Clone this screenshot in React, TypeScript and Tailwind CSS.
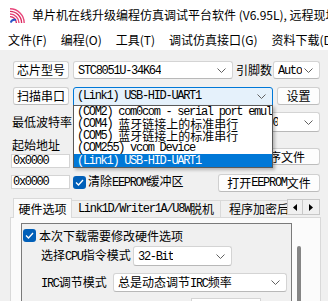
import React from "react";

const MONO = "font-['Liberation_Mono',monospace] text-[12px] tracking-[-1.3px]";

function Chevron() {
  return (
    <svg width="9" height="5" viewBox="0 0 9 5" className="shrink-0">
      <polyline points="0.5,0.5 4.5,4.5 8.5,0.5" fill="none" stroke="#606060" strokeWidth="1" />
    </svg>
  );
}

function Select({
  className,
  children,
}: {
  className: string;
  children: React.ReactNode;
}) {
  return (
    <div
      className={`flex items-center justify-between overflow-hidden rounded-[3px] border border-[#d4d4d4] border-b-[#b8b8b8] bg-white pl-[4px] pr-[6px] ${className}`}
    >
      <div className="overflow-hidden whitespace-nowrap">{children}</div>
      <Chevron />
    </div>
  );
}

function Btn({ className, children }: { className: string; children: React.ReactNode }) {
  return (
    <div
      className={`flex items-center justify-center whitespace-nowrap rounded-[3px] border border-[#d0d0d0] border-b-[#bcbcbc] bg-[#fdfdfd] ${className}`}
    >
      {children}
    </div>
  );
}

function Check() {
  return (
    <div className="flex h-[13px] w-[13px] shrink-0 items-center justify-center rounded-[3px] bg-[#005fb8]">
      <svg width="9" height="7" viewBox="0 0 9 7">
        <polyline points="1,3.5 3.5,6 8,1" fill="none" stroke="white" strokeWidth="1.3" />
      </svg>
    </div>
  );
}

function Logo() {
  return (
    <svg width="15" height="15" viewBox="0 0 15 15" className="shrink-0">
      <path d="M0 0.8 A14.2 14.2 0 0 1 14.2 15" fill="none" stroke="#e8457a" strokeWidth="1.4" />
      <path d="M0 3.4 A11.6 11.6 0 0 1 11.6 15" fill="none" stroke="#d92b5f" strokeWidth="1.4" />
      <path d="M0 6 A9 9 0 0 1 9 15" fill="none" stroke="#e8457a" strokeWidth="1.4" />
      <path d="M0 8.6 A6.4 6.4 0 0 1 6.4 15" fill="none" stroke="#d92b5f" strokeWidth="1.4" />
      <path d="M0.8 14.6 Q1.8 11 6 12" fill="none" stroke="#2a55c8" strokeWidth="2" />
    </svg>
  );
}

const menu = ["文件(F)", "编程(O)", "工具(T)", "调试仿真接口(G)", "资料下载(D)"];

export default function App() {
  return (
    <div className="relative h-[301px] w-[328px] overflow-hidden bg-[#f0f0f0] font-['Noto_Sans_CJK_SC',sans-serif] text-[12px] leading-none text-black">
      {/* title bar */}
      <div className="flex h-[30px] items-center bg-white pl-[10px]">
        <Logo />
        <span className="ml-[7px] whitespace-nowrap">
          单片机在线升级编程仿真调试平台软件 (V6.95L), 远程现场
        </span>
      </div>
      {/* menu bar */}
      <div className="flex h-[20px] items-center whitespace-nowrap bg-white pl-[1px]">
        {menu.map((m) => (
          <span key={m} className="px-[7px]">
            {m}
          </span>
        ))}
      </div>

      {/* body */}
      <div className="relative pt-[11px]">
        {/* row 1 */}
        <div className="flex h-[18px] items-center">
          <Btn className="ml-[13px] h-[18px] w-[56px]">芯片型号</Btn>
          <Select className="ml-[4px] h-[18px] w-[160px]">
            <span className={MONO}>STC8051U-34K64</span>
          </Select>
          <span className="ml-[3px] w-[37px]">引脚数</span>
          <Select className="h-[18px] w-[47px]">
            <span className={MONO}>Auto</span>
          </Select>
        </div>

        {/* row 2 */}
        <div className="mt-[8px] flex h-[18px] items-center">
          <Btn className="ml-[13px] h-[18px] w-[56px]">扫描串口</Btn>
          <div className="ml-[4px] flex h-[19px] w-[200px] items-center justify-between rounded-t-[3px] border border-[#0078d7] bg-[#e5f1fb] pl-[3px] pr-[6px]">
            <span className={MONO}>(Link1) USB-HID-UART1</span>
            <Chevron />
          </div>
          <Btn className="ml-[4px] h-[18px] w-[43px]">设置</Btn>
        </div>

        {/* rows 3-5 */}
        <div className="mt-[7px] flex">
          {/* left column */}
          <div className="ml-[11px] flex w-[62px] flex-col">
            <div className="flex h-[20px] items-center pl-[1px]">最低波特率</div>
            <div className="mt-[7px] h-[12px] pl-[1px]">起始地址</div>
            <div className="mt-[3px] flex h-[14px] w-[59px] items-center border border-[#d4d4d4] bg-white pl-[1px]">
              <span className={MONO}>0x0000</span>
            </div>
            <div className="mt-[7px] flex h-[14px] w-[59px] items-center border border-[#d4d4d4] bg-white pl-[1px]">
              <span className={MONO}>0x0000</span>
            </div>
          </div>
          {/* right column */}
          <div className="flex w-[247px] flex-col">
            <div className="flex h-[20px] items-center">
              <Select className="ml-[165px] h-[20px] w-[82px]">
                <span className={MONO}>115200</span>
              </Select>
            </div>
            <div className="mt-[16px] flex h-[17px] items-start">
              <Btn className="ml-auto h-[17px] w-[102px]">打开程序文件</Btn>
            </div>
            <div className="mt-[9px] flex h-[18px] items-start">
              <div className="mt-[1px] flex items-center">
                <Check />
                <span className="ml-[2px]">
                  清除<span className={MONO}>EEPROM</span>缓冲区
                </span>
              </div>
              <Btn className="ml-auto h-[18px] w-[102px]">
                打开<span className={MONO}>EEPROM</span>文件
              </Btn>
            </div>
          </div>
        </div>

        {/* tabs */}
        <div className="ml-[10px] mt-[5px] flex h-[20px] w-[310px] items-end whitespace-nowrap">
          <div className="relative z-10 -mb-px ml-[3px] flex h-[20px] w-[59px] items-center justify-center border border-b-0 border-[#d9d9d9] bg-[#fbfbfb]">
            硬件选项
          </div>
          <div className="flex h-[17px] w-[149px] items-center justify-center border border-b-0 border-l-0 border-[#d9d9d9]">
            <span className={MONO}>Link1D/Writer1A/U8W</span>脱机
          </div>
          <div className="flex h-[17px] w-[66px] items-center overflow-hidden border-t border-[#d9d9d9] pl-[8px]">
            程序加密后
          </div>
          <div className="mb-[2px] flex h-[16px] w-[16px] items-center justify-center border border-[#c8c8c8] bg-[#f0f0f0]">
            <svg width="4" height="7" viewBox="0 0 4 7">
              <polygon points="4,0 0,3.5 4,7" fill="#000" />
            </svg>
          </div>
          <div className="mb-[2px] flex h-[16px] w-[17px] items-center justify-center border border-l-0 border-[#c8c8c8] bg-[#f0f0f0]">
            <svg width="4" height="7" viewBox="0 0 4 7">
              <polygon points="0,0 4,3.5 0,7" fill="#000" />
            </svg>
          </div>
        </div>

        {/* tab page */}
        <div className="ml-[10px] flex h-[90px] w-[311px] items-start border border-[#d9d9d9] bg-[#fbfbfb]">
          <div className="ml-[10px] mt-[5px] flex h-[90px] w-[271px] flex-col border border-b-0 border-[#7a7a7a] bg-[#f0f0f0]">
            <div className="ml-[1px] mt-[5px] flex items-center">
              <Check />
              <span className="ml-[3px] whitespace-nowrap">本次下载需要修改硬件选项</span>
            </div>
            <div className="ml-[19px] mt-[4px] flex h-[20px] items-center">
              <span className="w-[92px] whitespace-nowrap">
                选择<span className={MONO}>CPU</span>指令模式
              </span>
              <Select className="h-[20px] w-[99px]">
                <span className={MONO}>32-Bit</span>
              </Select>
            </div>
            <div className="ml-[19px] mt-[7px] flex h-[19px] items-center">
              <span className="w-[72px] whitespace-nowrap">
                <span className={MONO}>IRC</span>调节模式
              </span>
              <Select className="h-[19px] w-[174px]">
                总是动态调节<span className={MONO}>IRC</span>频率
              </Select>
            </div>
            <div className="ml-[169px] mt-[6px] h-[14px] w-[70px] border border-[#d4d4d4] bg-white" />
          </div>
          <div className="ml-[5px] mt-[28px] h-[70px] w-[4px] rounded-full bg-[#858585]" />
        </div>

        {/* open dropdown list */}
        <div className="absolute left-[73px] top-[55px] h-[63px] w-[200px] overflow-hidden border border-[#5a5a5a] bg-white shadow-[2px_2px_3px_rgba(0,0,0,0.25)]">
          <div className="flex h-[12px] items-center whitespace-nowrap pl-[3px]">
            <span className={MONO}>(COM2) com0com - serial port emul</span>
          </div>
          <div className="flex h-[12px] items-center whitespace-nowrap pl-[3px]">
            <span className={MONO}>(COM4)&nbsp;</span>蓝牙链接上的标准串行
          </div>
          <div className="flex h-[12px] items-center whitespace-nowrap pl-[3px]">
            <span className={MONO}>(COM5)&nbsp;</span>蓝牙链接上的标准串行
          </div>
          <div className="flex h-[12px] items-center whitespace-nowrap pl-[3px]">
            <span className={MONO}>(COM255) vcom Device</span>
          </div>
          <div className="flex h-[13px] items-center whitespace-nowrap bg-[#0078d7] pl-[3px] text-white">
            <span className={MONO}>(Link1) USB-HID-UART1</span>
          </div>
        </div>
      </div>
    </div>
  );
}
